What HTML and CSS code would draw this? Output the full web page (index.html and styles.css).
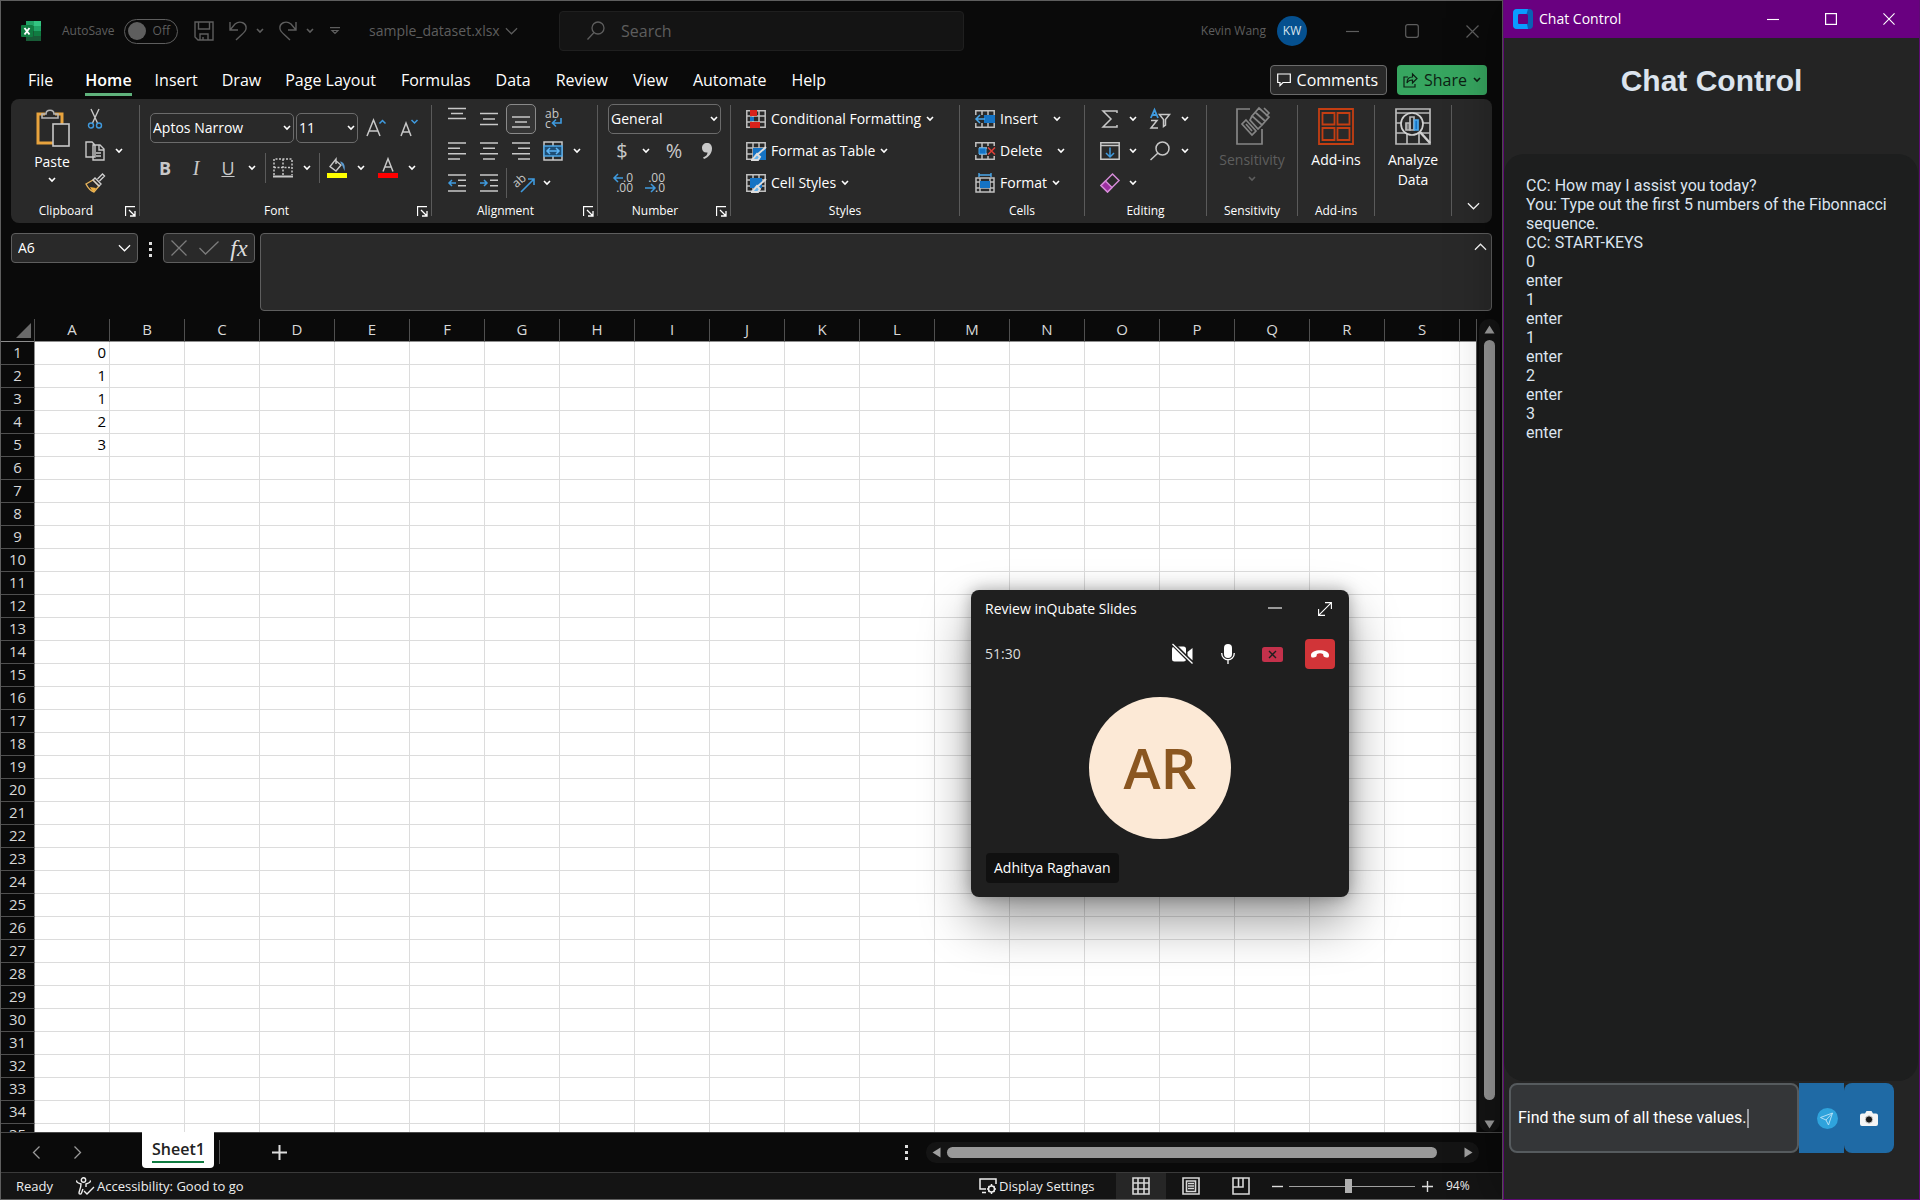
FILE: index.html
```html
<!DOCTYPE html>
<html lang="en">
<head>
<meta charset="utf-8">
<title>sample_dataset.xlsx</title>
<link rel="stylesheet" href="styles.css">
</head>
<body>
<svg class="defs" aria-hidden="true">
  <symbol id="chev" viewBox="0 0 8 6"><path d="M1 1l3 3 3-3" fill="none" stroke="currentColor" stroke-width="1.6"/></symbol>
  <symbol id="chev-lg" viewBox="0 0 14 8"><path d="M1 1l6 6 6-6" fill="none" stroke="currentColor" stroke-width="1.3"/></symbol>
  <symbol id="launch" viewBox="0 0 11 11"><path d="M.5 10V.5H10M4 4l5.5 5.5M10 5v5H5" fill="none" stroke="currentColor" stroke-width="1.3"/></symbol>
  <symbol id="grid" viewBox="0 0 20 18"><path d="M.8.8h18.400v16.400H.8zM.8 6h18.400M.8 12h18.400M7 .8v16.400M13 .8v16.400" fill="none" stroke="#c0c0c0" stroke-width="1.500"/></symbol>
  <symbol id="w-min" viewBox="0 0 13 13"><path d="M0 6.500h13" stroke="currentColor" stroke-width="1.200"/></symbol>
  <symbol id="w-close" viewBox="0 0 13 13"><path d="M.5.5l12 12M12.500.5l-12 12" stroke="currentColor" stroke-width="1.200"/></symbol>
</svg>

<main class="excel">
  <header class="titlebar">
    <div class="title-left">
      <svg class="logo" viewBox="0 0 20 20"><path d="M5 0h8v10H5z" fill="#21a366"/><path d="M13 0h7v5h-7z" fill="#33c481"/><path d="M13 5h7v5h-7z" fill="#21a366"/><path d="M5 5h8v5H5z" fill="#107c41"/><path d="M13 10h7v5h-7z" fill="#107c41"/><path d="M5 10h8v10H5zM13 15h7v5h-7z" fill="#185c37"/><rect y="4" width="12" height="12" rx="1" fill="#107c41"/><path d="M3.500 7l5 6.500M8.500 7l-5 6.500" stroke="#fff" stroke-width="1.900"/></svg>
      <label class="autosave"><span class="autosave-name">AutoSave</span><span class="toggle"><input type="checkbox"><span>Off</span></span></label>
      <button class="tb save" aria-label="Save"><svg width="20" height="20" viewBox="0 0 20 20" fill="none" stroke="currentColor" stroke-width="1.400"><path d="M1 1h18v18H4l-3-3zM4.500 1v7h11V1M6 19v-6h8v6M9 19v-3"/></svg></button>
      <button class="tb" aria-label="Undo"><svg width="20" height="20" viewBox="0 0 20 20" fill="none" stroke="currentColor" stroke-width="1.400"><path d="M2 1v8h8M2 9l5-6c5-4 12-1 11 5-.5 3-3 4-10 11"/></svg><svg class="chev"><use href="#chev"/></svg></button>
      <button class="tb" aria-label="Redo"><svg width="20" height="20" viewBox="0 0 20 20" fill="none" stroke="currentColor" stroke-width="1.400"><path d="M18 1v8h-8M18 9l-5-6C8-1 1 2 2 8c.5 3 3 4 10 11"/></svg><svg class="chev"><use href="#chev"/></svg></button>
      <button class="tb more" aria-label="Customize toolbar"><svg width="10" height="8" viewBox="0 0 10 8" fill="none" stroke="currentColor" stroke-width="1.200"><path d="M0 .7h10M2 3.500l3 3 3-3z"/></svg></button>
      <button class="tb filename">sample_dataset.xlsx<svg class="chev-lg"><use href="#chev-lg"/></svg></button>
    </div>
    <label class="search"><svg width="18" height="20" viewBox="0 0 18 20" fill="none" stroke="currentColor" stroke-width="1.300"><circle cx="11" cy="7" r="6"/><path d="M7 11.500l-6.500 7"/></svg><input type="text" placeholder="Search" aria-label="Search"></label>
    <div class="title-right">
      <span>Kevin Wang</span><span class="avatar">KW</span>
      <button class="win" aria-label="Minimize"><svg width="13" height="13"><use href="#w-min"/></svg></button>
      <button class="win" aria-label="Maximize"><svg width="14" height="14" viewBox="0 0 14 14"><rect x=".7" y=".7" width="12.600" height="12.600" rx="2" fill="none" stroke="currentColor" stroke-width="1.200"/></svg></button>
      <button class="win" aria-label="Close"><svg width="13" height="13"><use href="#w-close"/></svg></button>
    </div>
  </header>

  <nav class="tabs">
    <button class="file">File</button><button class="active">Home</button><button>Insert</button><button>Draw</button><button>Page Layout</button><button>Formulas</button><button>Data</button><button>Review</button><button>View</button><button>Automate</button><button>Help</button>
    <button class="comments"><svg width="14" height="14" viewBox="0 0 14 14" fill="none" stroke="currentColor" stroke-width="1.200"><path d="M.7 1h12.600v8.500H6L3 12.500v-3H.7z"/></svg>Comments</button>
    <button class="share"><svg width="15" height="15" viewBox="0 0 15 15" fill="none" stroke="currentColor" stroke-width="1.200"><path d="M5 4H1v10h11v-3M4 10c0-4 2-6 5.500-6V1l4.500 4.500L9.500 10V7C7 7 5 8 4 10z"/></svg>Share<svg class="chev"><use href="#chev"/></svg></button>
  </nav>

  <section class="ribbon">
    <div class="group g-clip">
      <div class="body clip">
        <button class="paste"><svg width="36" height="38" viewBox="-2 0 36 38" fill="none"><path d="M9 5H2v29h15M19 5h7v10" stroke="#e8a33d" stroke-width="3"/><path d="M6 9V5h4c0-5 8-5 8 0h4v4z" stroke="#b5b5b5" stroke-width="1.600"/><rect x="17" y="15" width="16" height="22" fill="#292929" stroke="#c8c8c8" stroke-width="1.600"/></svg><span>Paste</span><svg class="chev"><use href="#chev"/></svg></button>
        <div class="rows clip-rows">
          <div><button aria-label="Cut"><svg width="14" height="20" viewBox="0 0 14 20" fill="none" stroke-width="1.400"><path d="M3 0l6.500 14M11 0L4.500 14" stroke="#c8c8c8"/><circle cx="3" cy="16.500" r="2.500" stroke="#3f9ade"/><circle cx="11" cy="16.500" r="2.500" stroke="#3f9ade"/></svg></button></div>
          <div><button aria-label="Copy"><svg width="20" height="20" viewBox="0 0 20 20" fill="#292929" stroke="#c8c8c8" stroke-width="1.400"><path d="M1 1h6l3 3v12H1zM8 4h7l4 4v11H8zM14 4v5h5M11 12h5M11 15h5"/></svg></button><button aria-label="Copy options"><svg class="chev"><use href="#chev"/></svg></button></div>
          <div><button aria-label="Format painter"><svg width="20" height="20" viewBox="0 0 20 20" fill="none" stroke-width="1.400"><path d="M1 11l7-4 6 6-5 6c-3-1-6-4-8-8z" stroke="#e8b45a"/><path d="M5 14l6 1-2 4c-2-1-3-3-4-5z" fill="#f0b040"/><path d="M8 7l2-2 6 6-2 2zM12.500 6l5-5 2 2-5 5" stroke="#d0d0d0"/></svg></button></div>
        </div>
      </div>
      <div class="caption"><span>Clipboard</span><button aria-label="Clipboard settings"><svg width="11" height="11"><use href="#launch"/></svg></button></div>
    </div>
    <span class="sep"></span>
    <div class="group g-font">
      <div class="body fontbody">
        <div class="font1">
          <span class="combo"><select aria-label="Font"><option>Aptos Narrow</option></select><svg class="chev"><use href="#chev"/></svg></span>
          <span class="combo"><select aria-label="Font size"><option>11</option></select><svg class="chev"><use href="#chev"/></svg></span>
          <button aria-label="Increase font size"><svg width="20" height="20" viewBox="0 0 20 20" fill="none" stroke-width="1.500"><path d="M1 18L7.500 2 14 18M3.500 13h8" stroke="#c8c8c8"/><path d="M13.500 5.500l3-3 3 3" stroke="#3f9ade"/></svg></button>
          <button aria-label="Decrease font size"><svg width="20" height="20" viewBox="0 0 20 20" fill="none" stroke-width="1.500"><path d="M2 18L7 5l5 13M4 14h6" stroke="#c8c8c8"/><path d="M12.500 2l3 3 3-3" stroke="#3f9ade"/></svg></button>
        </div>
        <div class="font2">
          <button class="b">B</button><button class="i">I</button><button class="u">U</button><button aria-label="Underline options"><svg class="chev"><use href="#chev"/></svg></button><span class="vsep"></span>
          <button aria-label="Borders"><svg width="20" height="20" viewBox="0 0 20 20" fill="none" stroke="#c8c8c8" stroke-width="1.500"><path d="M1 17V1h18v16M10 1v16M1 9.500h18" stroke-dasharray="2 1.500"/><path d="M0 18.500h20" stroke-width="2"/></svg></button><button aria-label="Border options"><svg class="chev"><use href="#chev"/></svg></button><span class="vsep"></span>
          <button aria-label="Fill color"><svg width="20" height="20" viewBox="0 0 20 20" fill="none"><path d="M8 2l6 5-5 6-6-4.500L9 1v5" stroke="#c8c8c8" stroke-width="1.400"/><path d="M13 3.500c4 .5 5.500 4 4.500 9.500l-2-5z" fill="#5b9bd0"/><path d="M0 15h20v5H0z" fill="#ff0"/></svg></button><button aria-label="Fill color options"><svg class="chev"><use href="#chev"/></svg></button>
          <button aria-label="Font color"><svg width="20" height="20" viewBox="0 0 20 20" fill="none"><path d="M5 13.500L10 .8l5 12.700M6.800 9h6.400" stroke="#c8c8c8" stroke-width="1.500"/><path d="M0 15h20v5H0z" fill="red"/></svg></button><button aria-label="Font color options"><svg class="chev"><use href="#chev"/></svg></button>
        </div>
      </div>
      <div class="caption"><span>Font</span><button aria-label="Font settings"><svg width="11" height="11"><use href="#launch"/></svg></button></div>
    </div>
    <span class="sep"></span>
    <div class="group g-align">
      <div class="body rows align-rows">
        <div>
          <button class="up" aria-label="Top align"><svg width="18" height="18" viewBox="0 0 18 18" stroke="#c8c8c8" stroke-width="1.500"><path d="M0 2.500h18M3 7.500h12M0 12.500h18"/></svg></button>
          <button aria-label="Middle align"><svg width="18" height="18" viewBox="0 0 18 18" stroke="#c8c8c8" stroke-width="1.500"><path d="M0 3.500h18M3 9h12M0 14.500h18"/></svg></button>
          <button class="pressed" aria-label="Bottom align"><svg width="18" height="18" viewBox="0 0 18 18" stroke="#c8c8c8" stroke-width="1.500"><path d="M0 7h18M3 12h12M0 17h18"/></svg></button>
          <button aria-label="Wrap text"><svg width="18" height="24" viewBox="0 0 18 24" fill="none"><text x="1" y="11" class="glyph">ab</text><text x="1" y="21" class="glyph">c</text><path d="M17 11v5H9M12 12.500L8.500 16l3.500 3.500" stroke="#3f9ade" stroke-width="1.600"/></svg></button>
        </div>
        <div>
          <button aria-label="Align left"><svg width="18" height="18" viewBox="0 0 18 18" stroke="#c8c8c8" stroke-width="1.500"><path d="M0 1h18M0 6.300h12M0 11.700h18M0 17h12"/></svg></button>
          <button aria-label="Center"><svg width="18" height="18" viewBox="0 0 18 18" stroke="#c8c8c8" stroke-width="1.500"><path d="M0 1h18M3 6.300h12M0 11.700h18M3 17h12"/></svg></button>
          <button aria-label="Align right"><svg width="18" height="18" viewBox="0 0 18 18" stroke="#c8c8c8" stroke-width="1.500"><path d="M0 1h18M6 6.300h12M0 11.700h18M6 17h12"/></svg></button>
          <button aria-label="Merge and center"><svg width="20" height="20" viewBox="0 0 20 20" fill="none"><path d="M1 1h18v18H1zM10 1v4M10 15v4" stroke="#c8c8c8" stroke-width="1.500"/><path d="M1 5h18v10H1z" fill="#1f4d73" stroke="#4ea6e6" stroke-width="1.500"/><path d="M4 10h12M7 7l-3 3 3 3M13 7l3 3-3 3" stroke="#5db4f5" stroke-width="1.500"/></svg></button>
          <button aria-label="Merge options"><svg class="chev"><use href="#chev"/></svg></button>
        </div>
        <div>
          <button aria-label="Decrease indent"><svg width="18" height="18" viewBox="0 0 18 18" fill="none" stroke="#c8c8c8" stroke-width="1.500"><path d="M0 1h18M10 6.300h8M10 11.700h8M0 17h18"/><path d="M8 9H1M4 6L1 9l3 3" stroke="#3f9ade"/></svg></button>
          <button aria-label="Increase indent"><svg width="18" height="18" viewBox="0 0 18 18" fill="none" stroke="#c8c8c8" stroke-width="1.500"><path d="M0 1h18M10 6.300h8M10 11.700h8M0 17h18"/><path d="M0 9h7M4 6l3 3-3 3" stroke="#3f9ade"/></svg></button>
          <button class="orient" aria-label="Orientation"><svg width="21" height="20" viewBox="0 0 21 20" fill="none"><text x="2" y="14" class="glyph" transform="rotate(-42 4 14)">ab</text><path d="M7 19L19.500 6.500M14 6h6v6" stroke="#3f9ade" stroke-width="1.600"/></svg></button>
          <button aria-label="Orientation options"><svg class="chev"><use href="#chev"/></svg></button>
        </div>
      </div>
      <div class="caption"><span>Alignment</span><button aria-label="Alignment settings"><svg width="11" height="11"><use href="#launch"/></svg></button></div>
    </div>
    <span class="sep"></span>
    <div class="group g-num">
      <div class="body rows num-rows">
        <div><span class="combo"><select aria-label="Number format"><option>General</option></select><svg class="chev"><use href="#chev"/></svg></span></div>
        <div><button class="big">$</button><button aria-label="Currency options"><svg class="chev"><use href="#chev"/></svg></button><button class="big">%</button><button aria-label="Comma style"><svg width="10" height="16" viewBox="0 0 10 16" fill="#c8c8c8"><path d="M5 0c3 0 5 2 5 5.500C10 10 7 14 2 16L1 14.500c3-1 4.500-3 4.500-5C2 10 0 8 0 5c0-3 2-5 5-5z"/></svg></button></div>
        <div><button aria-label="Increase decimal"><svg width="20" height="24" viewBox="0 0 20 24" fill="none"><text x="20" y="11" text-anchor="end" class="glyph">.0</text><text x="20" y="21" text-anchor="end" class="glyph">.00</text><path d="M10 7H1M5 3L1 7l4 4" stroke="#3f9ade" stroke-width="1.500"/></svg></button><button aria-label="Decrease decimal"><svg width="20" height="24" viewBox="0 0 20 24" fill="none"><text x="20" y="11" text-anchor="end" class="glyph">.00</text><text x="20" y="21" text-anchor="end" class="glyph">.0</text><path d="M0 17h10M6 13l4 4-4 4" stroke="#3f9ade" stroke-width="1.500"/></svg></button></div>
      </div>
      <div class="caption"><span>Number</span><button aria-label="Number settings"><svg width="11" height="11"><use href="#launch"/></svg></button></div>
    </div>
    <span class="sep"></span>
    <div class="group g-styles">
      <div class="body rows wide-rows">
        <div><button><svg width="20" height="18" viewBox="0 0 20 18"><use href="#grid"/><path d="M4 0h7v6H4zM4 12h10v6H4z" fill="#d8221c"/><path d="M4 7h4v4H4z" fill="#1573c4"/></svg>Conditional Formatting<svg class="chev"><use href="#chev"/></svg></button></div>
        <div><button><svg width="20" height="18" viewBox="0 0 20 18"><use href="#grid"/><path d="M7 6h13v12H7z" fill="#1573c4"/><path d="M20 5l-9 8M11 12l3 3-2 3H5c2 0 3-3 6-6z" fill="#64b5f0" stroke="#ddd" stroke-width="2"/></svg>Format as Table<svg class="chev"><use href="#chev"/></svg></button></div>
        <div><button><svg width="20" height="18" viewBox="0 0 20 18"><use href="#grid"/><path d="M4 4h12v10H4z" fill="#1573c4"/><path d="M20 5l-9 8M11 12l3 3-2 3H5c2 0 3-3 6-6z" fill="#64b5f0" stroke="#ddd" stroke-width="2"/></svg>Cell Styles<svg class="chev"><use href="#chev"/></svg></button></div>
      </div>
      <div class="caption"><span>Styles</span></div>
    </div>
    <span class="sep"></span>
    <div class="group g-cells">
      <div class="body rows wide-rows">
        <div><button><svg width="20" height="18" viewBox="0 0 20 18"><use href="#grid"/><path d="M9 5h11v8H9z" fill="#1573c4"/><path d="M0 5h9v8H0z" fill="#292929"/><path d="M10 9H1M5 5L1 9l4 4" fill="none" stroke="#4aa7ea" stroke-width="1.500"/></svg>Insert</button><button class="gap" aria-label="Insert options"><svg class="chev"><use href="#chev"/></svg></button></div>
        <div><button><svg width="20" height="18" viewBox="0 0 20 18"><use href="#grid"/><path d="M12 4h8v10h-8zM0 5h4v8H0z" fill="#292929"/><path d="M4 6h7v6H4z" fill="#1573c4" stroke="#4aa7ea"/><path d="M13 5.500l7 7M20 5.500l-7 7" stroke="#e04038" stroke-width="1.500"/></svg>Delete</button><button class="gap" aria-label="Delete options"><svg class="chev"><use href="#chev"/></svg></button></div>
        <div><button><svg width="20" height="20" viewBox="0 0 20 20"><path d="M1 5h18v14H1zM1 9h18M1 15h18M5 5v14M15 5v14" fill="none" stroke="#c0c0c0" stroke-width="1.500"/><path d="M5 8h10v7H5z" fill="#1573c4"/><path d="M4 0v4M16 0v4M4 2h12" stroke="#4aa7ea" stroke-width="1.400"/></svg>Format<svg class="chev"><use href="#chev"/></svg></button></div>
      </div>
      <div class="caption"><span>Cells</span></div>
    </div>
    <span class="sep"></span>
    <div class="group g-edit">
      <div class="body rows edit-rows">
        <div><button aria-label="AutoSum"><svg width="18" height="18" viewBox="0 0 18 18" fill="none" stroke="#c8c8c8" stroke-width="1.500"><path d="M16 3V1H2l8 8-8 8h14v-2"/></svg></button><button aria-label="AutoSum options"><svg class="chev"><use href="#chev"/></svg></button>
        <button aria-label="Sort and filter"><svg width="20" height="20" viewBox="0 0 20 20" fill="none" stroke-width="1.500"><path d="M.8 9L4.500.8 8 9M2 6h5" stroke="#3f9ade" stroke-width="1.800"/><path d="M1 11.500h6L1 19h7M9.500 5.500h10l-4 5V16l-2 1.500v-7z" stroke="#c8c8c8"/></svg></button><button aria-label="Sort options"><svg class="chev"><use href="#chev"/></svg></button></div>
        <div><button aria-label="Fill"><svg width="20" height="18" viewBox="0 0 20 18" fill="none" stroke="#c8c8c8" stroke-width="1.500"><path d="M.8.8h18.400v16.400H.8zM.8 3.500h18.400"/><path d="M10 5.500v9M6 11l4 4 4-4" stroke="#3f9ade"/></svg></button><button aria-label="Fill options"><svg class="chev"><use href="#chev"/></svg></button>
        <button aria-label="Find and select"><svg width="20" height="20" viewBox="0 0 20 20" fill="none" stroke="#c8c8c8" stroke-width="1.500"><circle cx="12.500" cy="7.500" r="6.500"/><path d="M8 12l-7.500 7"/></svg></button><button aria-label="Find options"><svg class="chev"><use href="#chev"/></svg></button></div>
        <div><button aria-label="Clear"><svg width="20" height="20" viewBox="0 0 20 20" fill="none" stroke="#d48ad6" stroke-width="1.500"><path d="M12.500 1L19 7.500 7.500 19 1 12.500z"/><path d="M5.500 8l6.500 6.500L7.500 19 1 12.500z" fill="#9c2fa0"/></svg></button><button aria-label="Clear options"><svg class="chev"><use href="#chev"/></svg></button></div>
      </div>
      <div class="caption"><span>Editing</span></div>
    </div>
    <span class="sep"></span>
    <div class="group g-sens">
      <div class="body"><button class="tall off"><svg width="36" height="38" viewBox="0 0 36 38" fill="none" stroke="#858585" stroke-width="1.700"><path d="M16 2H3v35h25V22"/><path d="M12 13l10 11-4 4L8 17zM12 17l6 7M18 9l7-8 10 9-7 8zM18 9l-2 4 8 9 4-4M21 5l10 9M30 1l5 5-3 3"/></svg><span>Sensitivity</span><svg class="chev"><use href="#chev"/></svg></button></div>
      <div class="caption"><span>Sensitivity</span></div>
    </div>
    <span class="sep"></span>
    <div class="group g-add">
      <div class="body"><button class="tall"><svg width="36" height="38" viewBox="0 0 36 38" fill="none" stroke="#c43e12" stroke-width="1.800"><path d="M1 2h34v35H1zM4.500 6h12v11.500h-12zM19.500 6h12v11.500h-12zM4.500 21h12v12h-12zM19.500 21h12v12h-12z"/></svg><span>Add-ins</span></button></div>
      <div class="caption"><span>Add-ins</span></div>
    </div>
    <span class="sep"></span>
    <div class="group g-add">
      <div class="body"><button class="tall"><svg width="36" height="38" viewBox="0 0 36 38" fill="none" stroke="#b8b8b8" stroke-width="1.700"><path d="M1 2h34v35H1zM1 6h34M1 16h8M27 16h8M1 26h34M12 26v11M24 26v11"/><circle cx="17" cy="17" r="11" fill="#292929" stroke="#d0d0d0"/><path d="M25 25l10 11" stroke="#d0d0d0" stroke-width="2.500"/><path d="M11 16h4v7h-4z" fill="#777"/><path d="M15 10h4v13h-4z"/><path d="M19.500 13h3.500v10h-3.500z" fill="#1573c4" stroke="#4aa7ea"/></svg><span>Analyze<br>Data</span></button></div>
    </div>
    <span class="sep"></span>
    <button class="collapse" aria-label="Collapse ribbon"><svg class="chev-lg"><use href="#chev-lg"/></svg></button>
  </section>

  <section class="formula">
    <label class="namebox"><input type="text" value="A6" aria-label="Name box"><svg class="chev-lg"><use href="#chev-lg"/></svg></label>
    <span class="dots"><i></i><i></i><i></i></span>
    <div class="fxbox"><button aria-label="Cancel"><svg width="16" height="16" viewBox="0 0 16 16" stroke="#7c7c7c" stroke-width="1.300"><path d="M.5.5l15 15M15.500.5l-15 15"/></svg></button><button aria-label="Enter"><svg width="20" height="14" viewBox="0 0 20 14" fill="none" stroke="#7c7c7c" stroke-width="1.300"><path d="M.5 7l6 6L19.500.5"/></svg></button><button class="fx">fx</button></div>
    <div class="fbar"><textarea aria-label="Formula bar"></textarea><svg class="chev-lg flip"><use href="#chev-lg"/></svg></div>
  </section>

  <section class="sheet">
    <div class="gridview"><table><thead><tr id="letters"><th class="corner"><svg width="15" height="15"><path d="M15 0v15H0z" fill="#6a6a6a"/></svg></th></tr></thead><tbody id="cells"></tbody></table></div>
    <div class="vscroll"><svg width="11" height="9" viewBox="0 0 11 9"><path d="M5.500.5l5 8H.5z"/></svg><span></span><svg width="11" height="9" viewBox="0 0 11 9"><path d="M5.500 8.500l5-8H.5z"/></svg></div>
  </section>

  <section class="sheetbar">
    <button class="nav" aria-label="Previous sheet"><svg width="7" height="13" viewBox="0 0 7 13"><path d="M6.500.5l-6 6 6 6"/></svg></button>
    <button class="nav" aria-label="Next sheet"><svg width="7" height="13" viewBox="0 0 7 13"><path d="M.5.5l6 6-6 6"/></svg></button>
    <button class="sheet-tab"><span>Sheet1</span></button><span class="tabsep"></span>
    <button class="add" aria-label="New sheet"><svg width="15" height="15" viewBox="0 0 15 15"><path d="M7.500 0v15M0 7.500h15"/></svg></button>
    <span class="dots push"><i></i><i></i><i></i></span>
    <div class="hscroll"><svg width="9" height="11" viewBox="0 0 9 11"><path d="M.5 5.500l8-5v10z"/></svg><span></span><svg width="9" height="11" viewBox="0 0 9 11"><path d="M8.500 5.500l-8-5v10z"/></svg></div>
  </section>

  <footer class="status">
    <span class="ready">Ready</span>
    <button class="access"><svg width="19" height="18" viewBox="0 0 19 18" fill="none" stroke="currentColor" stroke-width="1.400"><circle cx="7.500" cy="3" r="2.200"/><path d="M1 3.500c-1 1.500 0 2 4 3.500 0 4-2 7-2 9 0 1.500 2 1.500 2.500 0L7 12M14 3.500c1 1.500 0 2-4 3.500v3M8 14l3 3 7-7"/></svg>Accessibility: Good to go</button>
    <button class="display"><svg width="18" height="16" viewBox="0 0 18 16" fill="none" stroke="currentColor" stroke-width="1.500"><path d="M7 11H1V1h16v5M3 14.500h4"/><circle cx="12.500" cy="11" r="3"/><path d="M12.500 6v2M12.500 14v2M8 11h2M15 11h2M9.500 8l1 1M14.500 13l1 1M15.500 8l-1 1M9.500 14l1-1"/></svg>Display Settings</button>
    <button class="view on" aria-label="Normal"><svg width="18" height="18" viewBox="0 0 18 18"><path d="M1 1h16v16H1zM1 6h16M1 12h16M6 1v16M12 1v16"/></svg></button>
    <button class="view" aria-label="Page layout"><svg width="18" height="18" viewBox="0 0 18 18"><path d="M1 1h16v16H1zM4.500 4h9v10.500h-9zM6 6.500h6M6 9h6M6 11.500h6"/></svg></button>
    <button class="view" aria-label="Page break"><svg width="18" height="18" viewBox="0 0 18 18"><path d="M1 1h16v16H1zM1 10h10V1M6.500 1v9"/></svg></button>
    <button class="zoom" aria-label="Zoom out"><svg width="11" height="11" viewBox="0 0 11 11"><path d="M0 5.500h11"/></svg></button>
    <input class="slider" type="range" min="0" max="100" value="47" aria-label="Zoom">
    <button class="zoom" aria-label="Zoom in"><svg width="11" height="11" viewBox="0 0 11 11"><path d="M0 5.500h11M5.500 0v11"/></svg></button>
    <span class="percent">94%</span>
  </footer>

  <aside class="call">
    <div class="call-title"><span>Review inQubate Slides</span><button aria-label="Minimize call"><svg width="14" height="14" viewBox="0 0 14 14"><path d="M0 6h14" stroke="#9a9a9a" stroke-width="2"/></svg></button><button aria-label="Expand call"><svg width="14" height="14" viewBox="0 0 14 14" fill="none" stroke="#fff" stroke-width="1.100"><path d="M.6 7v6.400H7M7 .6h6.400V7M.6 13.400L13.400.6"/></svg></button></div>
    <div class="call-tools"><span>51:30</span>
      <button aria-label="Camera"><svg width="22" height="20" viewBox="0 0 22 20"><rect x="0" y="2.500" width="14" height="15" rx="2.500" fill="#fff"/><path d="M15.500 8l5-4v12.500l-5-4z" fill="#fff"/><path d="M1 0l19.500 19.500" stroke="#1f1f1f" stroke-width="4"/><path d="M.5 0l20 19.500" stroke="#fff" stroke-width="1.300"/></svg></button>
      <button aria-label="Microphone"><svg width="14" height="20" viewBox="0 0 14 20"><rect x="3" y="0" width="8" height="14" rx="4" fill="#fff"/><path d="M.7 9c0 9 12.600 9 12.600 0M7 16v4" fill="none" stroke="#fff" stroke-width="1.300"/></svg></button>
      <button aria-label="Stop sharing"><svg width="21" height="15" viewBox="0 0 21 15"><rect width="21" height="15" rx="2.500" fill="#c4314b"/><path d="M7 4l7 7M14 4l-7 7" stroke="#1f1f1f" stroke-width="1.400"/></svg></button>
      <button class="hang" aria-label="Leave"><svg width="18" height="8" viewBox="0 0 18 8"><path d="M0 5C0-1.500 18-1.500 18 5c0 3-1 3-4.500 2C12 6.500 12.500 5 12 4c-2-1-4-1-6 0-.5 1 0 2.500-1.500 3C1 8 0 8 0 5z" fill="#fff"/></svg></button>
    </div>
    <div class="call-avatar">AR</div>
    <span class="call-name">Adhitya Raghavan</span>
  </aside>
</main>

<section class="chat">
  <header class="chat-title"><svg width="20" height="20" viewBox="0 0 20 20"><rect width="20" height="20" rx="4" fill="#0a5fb4"/><path d="M4 0h11l-1.500 5H6L5 6v8l1 1h8l1 5H4c-2.500 0-4-1.500-4-4V4c0-2.500 1.500-4 4-4z" fill="#0a9cff"/><rect x="5" y="5" width="10" height="10" rx="1.500" fill="#690080"/></svg><span>Chat Control</span>
    <button aria-label="Minimize"><svg width="12" height="13"><use href="#w-min"/></svg></button>
    <button aria-label="Maximize"><svg width="12" height="12" viewBox="0 0 12 12"><rect x=".6" y=".6" width="10.800" height="10.800" fill="none" stroke="currentColor" stroke-width="1.200"/></svg></button>
    <button aria-label="Close"><svg width="12" height="12"><use href="#w-close"/></svg></button></header>
  <h1>Chat Control</h1>
  <div class="log">CC: How may I assist you today?<br>You: Type out the first 5 numbers of the Fibonnacci sequence.<br>CC: START-KEYS<br>0<br>enter<br>1<br>enter<br>1<br>enter<br>2<br>enter<br>3<br>enter</div>
  <form class="compose">
    <label class="field"><input type="text" value="Find the sum of all these values." aria-label="Message"><i></i></label>
    <button type="button" class="send" aria-label="Send"><svg width="21" height="21" viewBox="0 0 21 21"><circle cx="10.500" cy="10.500" r="10.500" fill="#2fa3dc"/><path d="M3.500 9.500l12-4.500-4 12-2.500-5zM15.500 5L9 12" fill="none" stroke="#bfe4f7" stroke-width=".9"/></svg></button>
    <button type="button" class="camera" aria-label="Screenshot"><svg width="18" height="15" viewBox="0 0 18 15"><path d="M2 2.500h3L6.500 0h5L13 2.500h3a2 2 0 012 2V13a2 2 0 01-2 2H2a2 2 0 01-2-2V4.500a2 2 0 012-2z" fill="#f5f5f5"/><circle cx="9" cy="8.500" r="3.700" fill="#1a1a1a" stroke="#ddd"/></svg></button>
  </form>
</section>
<script src="grid.js"></script>
</body>
</html>
```
FILE: grid.js
```js
const letters = "ABCDEFGHIJKLMNOPQRS".split("").concat("");
const columnA = [0, 1, 1, 2, 3];
const head = document.getElementById("letters");
const body = document.getElementById("cells");

for (const letter of letters) {
  const th = document.createElement("th");
  th.textContent = letter;
  head.append(th);
}

for (let row = 1; row <= 35; row++) {
  const tr = document.createElement("tr");
  const th = document.createElement("th");
  th.textContent = row;
  tr.append(th);
  letters.forEach((_, col) => {
    const td = document.createElement("td");
    if (col === 0 && row <= columnA.length) td.textContent = columnA[row - 1];
    tr.append(td);
  });
  body.append(tr);
}
```
FILE: styles.css
```css
* { box-sizing: border-box; }
html, body { height: 100%; margin: 0; }
body {
  display: grid;
  grid-template-columns: minmax(0, 1fr) 417px;
  background: #0a0a0a;
  color: #fff;
  font: 14px/20px "Open Sans", "Noto Sans", sans-serif;
  overflow: hidden;
}
button, input, select, textarea { font: inherit; color: inherit; background: none; border: 0; margin: 0; padding: 0; }
input, textarea { outline: 0; min-width: 0; }
svg { display: block; flex: none; overflow: visible; }
.defs { position: absolute; width: 0; height: 0; }
.chev { width: 8px; height: 6px; }
.chev-lg { width: 13px; height: 8px; }
.flip { transform: rotate(180deg); }
button { display: flex; align-items: center; justify-content: center; white-space: nowrap; }

.excel {
  position: relative;
  display: flex;
  flex-direction: column;
  height: 100vh;
  border: 1px solid #5e5e5e;
  background: #0a0a0a;
}

/* Title bar */
.titlebar {
  display: grid;
  grid-template-columns: 558px minmax(200px, 405px) 1fr;
  align-items: center;
  height: 60px;
  color: #5e5e5e;
}
.title-left { display: flex; align-items: center; padding-left: 20px; }
.logo { width: 20px; height: 20px; }
.autosave { display: flex; align-items: center; margin-left: 21px; gap: 8px; font-size: 12px; }
.autosave-name { width: 54px; white-space: nowrap; }
.toggle { display: grid; }
.toggle > * { grid-area: 1 / 1; align-self: center; }
.toggle input {
  appearance: none;
  display: flex;
  align-items: center;
  width: 54px;
  height: 25px;
  padding-left: 3px;
  border: 1px solid #5e5e5e;
  border-radius: 13px;
}
.toggle input::before { content: ""; width: 18px; height: 18px; border-radius: 9px; background: #5e5e5e; }
.toggle span { justify-self: end; padding-right: 8px; }
.tb { margin-left: 14px; gap: 8px; }
.tb.save { margin-left: 16px; }
.tb.more { margin-left: 16px; }
.tb.filename { margin-left: 29px; gap: 5px; }
.search {
  display: flex;
  align-items: center;
  gap: 16px;
  height: 40px;
  padding-left: 27px;
  border: 1px solid #1f1f1f;
  border-radius: 4px;
  background: #141414;
  font-size: 16px;
}
.search input::placeholder { color: #5e5e5e; opacity: 1; }
.title-right { display: flex; align-items: center; justify-content: flex-end; font-size: 12px; white-space: nowrap; }
.avatar {
  width: 30px;
  margin: 0 15px 0 11px;
  border-radius: 15px;
  background: #05508f;
  color: #d8e4ee;
  line-height: 30px;
  text-align: center;
}
.win { width: 60px; height: 40px; }

/* Ribbon tabs */
.tabs { display: flex; align-items: center; height: 38px; padding: 0 15px 0 15px; font-size: 16px; }
.tabs > button { height: 32px; padding: 0 12px; }
.tabs > button:nth-child(n+6) { margin-left: 1px; }
.tabs .file { margin-right: 8px; }
.tabs .active { padding: 0; margin: 0 11px 0 12px; border: solid transparent; border-width: 3px 0; border-bottom-color: #5fb27c; font-weight: 600; }
.tabs > button.comments {
  height: 30px;
  margin-left: auto;
  padding: 0 8px 0 6px;
  gap: 6px;
  border: 1px solid #6b6b6b;
  border-radius: 4px;
  background: #292929;
}
.tabs > button.share { height: 30px; margin-left: 10px; padding: 0 6px; gap: 6px; border-radius: 4px; background: #37a660; color: #0c1f13; }

/* Ribbon */
.ribbon { display: flex; flex: none; height: 124px; margin: 0 10px; border-radius: 8px; background: #292929; }
.ribbon .sep { flex: none; width: 1px; margin: 6px 0 7px; background: #5a5a5a; }
.group { display: flex; flex: none; flex-direction: column; padding: 4px 0 5px; }
.body { flex: 1; }
.caption { display: grid; grid-template-columns: 1fr; align-items: center; height: 14px; font-size: 12px; line-height: 14px; text-align: center; }
.caption > * { grid-area: 1 / 1; }
.caption button { justify-self: end; margin-right: 3px; }
.g-clip { width: 128px; }
.g-font { width: 291px; }
.g-align { width: 165px; }
.g-num { width: 132px; }
.g-styles { width: 228px; }
.g-cells { width: 124px; }
.g-edit { width: 121px; }
.g-sens { width: 90px; }
.g-add { width: 76px; }
.g-clip .caption span, .g-font .caption span, .g-align .caption span, .g-num .caption span { padding-right: 18px; }
.rows { display: grid; grid-template-rows: 32px 32px 32px; align-content: start; }
.rows > div { display: grid; align-items: center; }

.clip { display: grid; grid-template-columns: 66px 1fr; padding-left: 8px; }
.paste { flex-direction: column; justify-content: flex-start; padding-top: 6px; gap: 5px; }
.clip-rows > div { grid-template-columns: 20px 27px; }

.fontbody { padding: 10px 0 0 10px; }
.font1 { display: flex; align-items: center; height: 30px; gap: 2px; }
.font1 .combo:nth-child(1) { width: 144px; }
.font1 .combo:nth-child(2) { width: 62px; }
.font1 button { width: 31px; }
.font2 { display: grid; grid-template-columns: 30px 32px 32px 16px 6px 33px 16px 5px 34px 14px 40px 8px; align-items: center; height: 50px; }
.font2 button { font-size: 18px; color: #c8c8c8; }
.font2 .chev { color: #fff; }
.font2 .b { font-weight: 700; }
.font2 .i { font-family: "Liberation Serif", serif; font-style: italic; font-size: 20px; }
.font2 .u { text-decoration: underline; }
.vsep { justify-self: end; width: 1px; height: 30px; background: #5a5a5a; }
.combo { display: grid; align-items: center; }
.combo > * { grid-area: 1 / 1; }
.combo select { appearance: none; width: 100%; height: 30px; padding-left: 2px; border: 1px solid #6b6b6b; border-radius: 5px; }
.combo .chev { justify-self: end; margin-right: 3px; }

.align-rows { padding-left: 9px; }
.align-rows > div { grid-template-columns: repeat(4, 32px) 16px; }
.align-rows > div:nth-child(3) { grid-template-columns: 32px 32px 37px 10px; }
.align-rows button { height: 30px; }
.align-rows .pressed { width: 30px; margin: 0 1px; border: 1px solid #8a8a8a; border-radius: 5px; background: #353535; }
.align-rows .up svg { margin-top: -8px; }
.align-rows .orient { margin-left: 1px; border-left: 1px solid #5a5a5a; }
.glyph { font: 12px "Open Sans", sans-serif; fill: #c8c8c8; }

.num-rows { padding-left: 10px; }
.num-rows > div:nth-child(1) { grid-template-columns: 113px; }
.num-rows > div:nth-child(2) { grid-template-columns: 28px 20px 36px 30px; }
.num-rows > div:nth-child(3) { grid-template-columns: 30px 34px; }
.num-rows .big { font-size: 20px; color: #c8c8c8; }

.wide-rows { padding-left: 15px; }
.wide-rows > div { display: flex; }
.wide-rows button { gap: 5px; }
.wide-rows .gap { width: 38px; }

.edit-rows { padding-left: 8px; }
.edit-rows > div { grid-template-columns: 34px 12px 42px 8px; }

.tall { flex-direction: column; width: 100%; padding-top: 4px; gap: 5px; }
.tall.off { color: #5e5e5e; }
.tall .chev { margin-top: 1px; }
.collapse { flex: 1; align-items: flex-end; padding-bottom: 13px; padding-left: 3px; }

/* Formula bar */
.formula { display: flex; flex: none; align-items: flex-start; height: 96px; padding: 10px 10px 0; }
.namebox { display: flex; align-items: center; width: 127px; height: 30px; padding: 0 6px; border: 1px solid #5e5e5e; border-radius: 4px; background: #292929; }
.namebox input { flex: 1; }
.dots { display: flex; flex-direction: column; gap: 3px; width: 3px; }
.dots i { height: 3px; background: #ddd; }
.formula .dots { margin: 9px 11px 0; }
.fxbox { display: grid; grid-template-columns: 30px 30px 30px; height: 30px; width: 92px; border: 1px solid #5e5e5e; border-radius: 4px; background: #292929; }
.fx { font: italic 24px/26px "Liberation Serif", serif; color: #ddd; }
.fbar { display: flex; flex: 1; height: 78px; margin-left: 5px; padding: 9px 4px 0 6px; border: 1px solid #5e5e5e; border-radius: 4px; background: #292929; }
.fbar textarea { flex: 1; resize: none; }

/* Sheet */
.sheet { display: flex; flex: 1; min-height: 0; border-bottom: 1px solid #4a4a4a; }
.gridview { flex: 1; min-width: 0; overflow: hidden; border-right: 1px solid #555; }
table { table-layout: fixed; width: 1534px; border-collapse: separate; border-spacing: 0; font-size: 15px; line-height: 20px; }
th, td { width: 75px; height: 23px; padding: 0; border: solid #dcdcdc; border-width: 0 1px 1px 0; overflow: hidden; vertical-align: top; }
td { padding-right: 3px; background: #fff; color: #000; text-align: right; }
th { border-color: #4f4f4f; background: #0a0a0a; color: #d8d8d8; font-weight: 400; text-align: center; }
thead th { border-bottom-color: #8e8e8e; }
tbody th { border-right-color: #8e8e8e; }
.corner { width: 34px; }
.corner svg { margin: 4px 3px 0 auto; }
.vscroll { display: flex; flex-direction: column; align-items: center; width: 21px; margin: 0 2px; padding: 6px 0 3px; gap: 6px; border-radius: 10px; background: #141414; fill: #a0a0a0; }
.vscroll span { flex: 1; width: 11px; margin-bottom: 14px; border-radius: 6px; background: #999; }

/* Sheet tabs */
.sheetbar { display: flex; flex: none; align-items: center; height: 39px; padding: 0 0 1px 15px; stroke: #9a9a9a; fill: none; stroke-width: 1.3; }
.nav { width: 41px; height: 30px; }
.sheet-tab { align-self: flex-start; height: 36px; margin: -1px 0 0 44px; padding: 0 10px; border-radius: 0 0 4px 4px; background: #fff; color: #222; font-size: 16px; font-weight: 600; }
.sheet-tab span { width: 52px; line-height: 24px; border-bottom: 2px solid #107c41; }
.tabsep { width: 1px; height: 24px; margin-left: 5px; background: #555; }
.add { width: 40px; height: 30px; margin-left: 39px; stroke: #ddd; stroke-width: 2; }
.push { margin-left: auto; }
.hscroll { display: flex; align-items: center; width: 553px; height: 21px; margin: 0 23px 0 18px; padding: 0 6px; gap: 6px; border-radius: 10px; background: #141414; fill: #a0a0a0; stroke: none; }
.hscroll span { flex: 1; height: 11px; margin-right: 21px; border-radius: 6px; background: #999; }

/* Status bar */
.status { display: flex; flex: none; align-items: center; height: 27px; padding-left: 15px; border-top: 1px solid #3a3a3a; background: #141414; font-size: 13px; color: #eee; }
.ready { width: 60px; }
.access, .display { gap: 2px; }
.display { margin-left: auto; margin-right: 21px; width: 116px; justify-content: flex-start; }
.view { width: 50px; height: 26px; fill: none; stroke: #d8d8d8; stroke-width: 1.6; }
.view.on { background: #262626; }
.zoom { width: 12px; stroke: #ddd; stroke-width: 1.4; }
.view + .zoom { margin-left: 5px; }
.slider { appearance: none; width: 126px; height: 14px; margin: 0 6px; background: linear-gradient(#a0a0a0, #a0a0a0) center / 100% 1px no-repeat; }
.slider::-webkit-slider-thumb { appearance: none; width: 7px; height: 14px; background: #b0b0b0; }
.percent { width: 69px; padding-left: 13px; font-size: 12px; }

/* Floating call window */
.call {
  position: absolute;
  right: 153px;
  top: 589px;
  width: 378px;
  height: 307px;
  display: flex;
  flex-direction: column;
  padding: 4px 14px 14px;
  border-radius: 8px;
  background: #1f1f1f;
  box-shadow: 0 24px 50px rgba(0, 0, 0, .4), 0 0 16px rgba(0, 0, 0, .3);
}
.call-title, .call-tools { display: flex; align-items: center; }
.call-title { height: 30px; gap: 36px; padding-right: 3px; }
.call-tools { height: 30px; margin-top: 15px; color: #ddd; }
.call span:first-child { flex: 1; }
.call-tools button { width: 45px; height: 30px; }
.call-tools .hang { width: 30px; margin-left: 10px; border-radius: 4px; background: #d13438; }
.call-avatar { align-self: center; width: 142px; height: 142px; margin: 28px 0 14px; border-radius: 71px; background: #fce9d6; color: #8a5620; font-size: 56px; font-weight: 600; line-height: 140px; text-align: center; }
.call-name { align-self: flex-start; margin-left: 1px; padding: 0 8px; border-radius: 4px; background: #101010; line-height: 30px; }

/* Chat window */
.chat {
  position: relative;
  display: flex;
  flex-direction: column;
  height: 100vh;
  border: 1px solid #5d0a72;
  border-top: 0;
  background: #242424;
  box-shadow: 0 0 50px rgba(0, 0, 0, .4);
}
.chat-title { display: flex; align-items: center; height: 38px; padding: 0 1px 0 9px; background: #690080; }
.chat-title span { flex: 1; padding-left: 6px; }
.chat-title button { width: 58px; height: 38px; }
h1 { margin: 26px 0 56px; color: #dce4ee; font: bold 30px/34px "Liberation Sans", Arial, sans-serif; text-align: center; }
.log { flex: 1; min-height: 0; margin-right: 1px; padding: 22px 22px 0; border-radius: 20px; background: #1d1e1e; color: #dce4ee; font: 16px/19px Roboto, sans-serif; }
.compose { display: flex; height: 118px; padding: 2px 25px 46px 5px; font: 16px/20px Roboto, sans-serif; }
.field { display: flex; flex: 1; align-items: center; padding-left: 7px; border: 2px solid #565b5e; border-radius: 8px; background: #343638; }
.field input { field-sizing: content; }
.field i { width: 2px; height: 19px; background: #9a9ca0; }
.send { width: 45px; padding-left: 12px; background: #1f6aa5; }
.camera { width: 50px; border-radius: 8px; background: #1f6aa5; }
```
